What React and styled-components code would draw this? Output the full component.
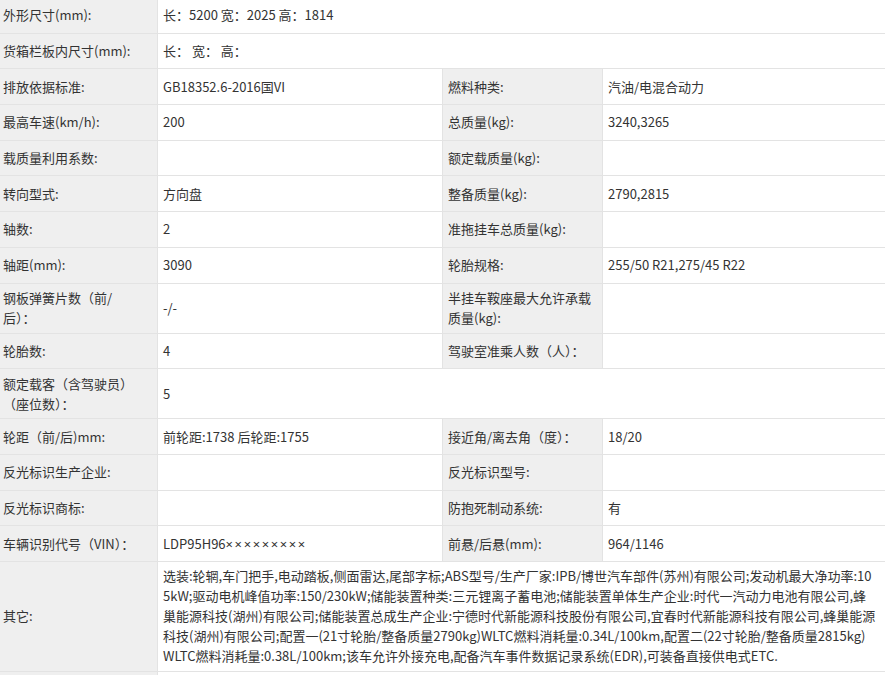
import React from "react"
import styled, { createGlobalStyle } from "styled-components"

const GlobalStyle = createGlobalStyle`
  html, body {
    margin: 0;
    padding: 0;
    background: #fff;
    overflow: hidden;
  }
  body {
    font-family: "Microsoft YaHei", "Noto Sans CJK SC", "Noto Sans", sans-serif;
    font-size: 13px;
    color: #333;
  }
`

const SpecTable = styled.table`
  border-collapse: collapse;
  table-layout: fixed;
  width: 891px;
  margin: -3px 0 0 -3px;
`

const Row = styled.tr`
  height: ${(p) => (p.$tall ? "auto" : "35.7px")};
`

const Label = styled.td`
  background: #efefef;
  border: 1px solid #e3e3e3;
  padding: 4.5px 5px;
  line-height: 20px;
  vertical-align: middle;
`

const Value = styled.td`
  background: #fff;
  border: 1px solid #e3e3e3;
  padding: 4.5px 5px;
  line-height: 20px;
  vertical-align: middle;
`

const Line = styled.span`
  display: block;
  white-space: nowrap;
`

const Cross = styled.span`
  font-family: "Noto Sans", sans-serif;
  letter-spacing: 1.6px;
`

// a label is a string or a list of its lines; a row with one pair spans the full width
const rows = [
  [["外形尺寸(mm):", "长：5200 宽：2025 高：1814"]],
  [["货箱栏板内尺寸(mm):", "长： 宽： 高："]],
  [["排放依据标准:", "GB18352.6-2016国VI"], ["燃料种类:", "汽油/电混合动力"]],
  [["最高车速(km/h):", "200"], ["总质量(kg):", "3240,3265"]],
  [["载质量利用系数:", ""], ["额定载质量(kg):", ""]],
  [["转向型式:", "方向盘"], ["整备质量(kg):", "2790,2815"]],
  [["轴数:", "2"], ["准拖挂车总质量(kg):", ""]],
  [["轴距(mm):", "3090"], ["轮胎规格:", "255/50 R21,275/45 R22"]],
  [
    [["钢板弹簧片数（前/", "后）："], "-/-"],
    [["半挂车鞍座最大允许承载", "质量(kg):"], ""],
  ],
  [["轮胎数:", "4"], ["驾驶室准乘人数（人）：", ""]],
  [[["额定载客（含驾驶员）", "（座位数）："], "5"]],
  [["轮距（前/后)mm:", "前轮距:1738 后轮距:1755"], ["接近角/离去角（度）：", "18/20"]],
  [["反光标识生产企业:", ""], ["反光标识型号:", ""]],
  [["反光标识商标:", ""], ["防抱死制动系统:", "有"]],
  [
    ["车辆识别代号（VIN）：", <>LDP95H96<Cross>×××××××××</Cross></>],
    ["前悬/后悬(mm):", "964/1146"],
  ],
]

const otherLines = [
  "选装:轮辋,车门把手,电动踏板,侧面雷达,尾部字标;ABS型号/生产厂家:IPB/博世汽车部件(苏州)有限公司;发动机最大净功率:10",
  "5kW;驱动电机峰值功率:150/230kW;储能装置种类:三元锂离子蓄电池;储能装置单体生产企业:时代一汽动力电池有限公司,蜂",
  "巢能源科技(湖州)有限公司;储能装置总成生产企业:宁德时代新能源科技股份有限公司,宜春时代新能源科技有限公司,蜂巢能源",
  "科技(湖州)有限公司;配置一(21寸轮胎/整备质量2790kg)WLTC燃料消耗量:0.34L/100km,配置二(22寸轮胎/整备质量2815kg)",
  "WLTC燃料消耗量:0.38L/100km;该车允许外接充电,配备汽车事件数据记录系统(EDR),可装备直接供电式ETC.",
]

const LabelText = ({ text }) =>
  Array.isArray(text) ? text.map((t) => <Line key={t}>{t}</Line>) : text

const App = () => (
  <>
    <GlobalStyle />
    <SpecTable>
      <colgroup>
        <col style={{ width: 160 }} />
        <col style={{ width: 285 }} />
        <col style={{ width: 160 }} />
        <col style={{ width: 286 }} />
      </colgroup>
      <tbody>
        {rows.map((cells, i) => (
          <Row key={i} $tall={cells.some(([label]) => Array.isArray(label))}>
            {cells.map(([label, value], j) => (
              <React.Fragment key={j}>
                <Label>
                  <LabelText text={label} />
                </Label>
                <Value colSpan={cells.length === 1 ? 3 : 1}>{value}</Value>
              </React.Fragment>
            ))}
          </Row>
        ))}
        <Row $tall>
          <Label>其它:</Label>
          <Value colSpan={3}>
            {otherLines.map((line) => (
              <Line key={line}>{line}</Line>
            ))}
          </Value>
        </Row>
        <Row>
          <Label />
          <Value colSpan={3} />
        </Row>
      </tbody>
    </SpecTable>
  </>
)

export default App
